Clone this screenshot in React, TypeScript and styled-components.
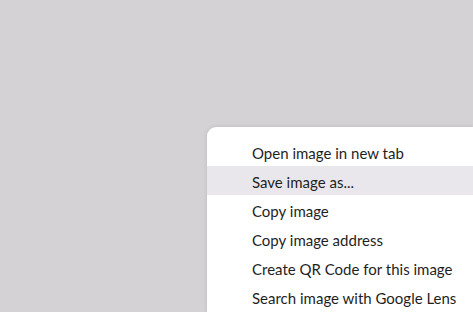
import React from 'react';
import styled, { createGlobalStyle } from 'styled-components';

const GlobalStyle = createGlobalStyle`
  html, body {
    margin: 0;
    padding: 0;
    background: #d4d2d5;
  }
`;

const Page = styled.div`
  width: 473px;
  height: 312px;
  overflow: hidden;
  display: flex;
  padding: 127px 0 0 207px;
  box-sizing: border-box;
`;

const Menu = styled.ul`
  list-style: none;
  margin: 0;
  padding: 10px 0 0;
  flex: 1;
  background: #ffffff;
  border-radius: 9px 0 0 0;
  box-shadow: 0 0 4px rgba(0, 0, 0, 0.12);
  font-family: 'Lato', 'Open Sans', sans-serif;
  font-size: 15px;
  color: #1f1f1f;
`;

const Item = styled.li<{ $active?: boolean }>`
  height: 29px;
  display: flex;
  align-items: center;
  padding: 2px 0 0 45px;
  box-sizing: border-box;
  white-space: nowrap;
  background: ${(p) => (p.$active ? '#e9e7ec' : 'transparent')};
`;

const items = [
  'Open image in new tab',
  'Save image as...',
  'Copy image',
  'Copy image address',
  'Create QR Code for this image',
  'Search image with Google Lens',
];

export default function App() {
  return (
    <>
      <GlobalStyle />
      <Page>
        <Menu>
          {items.map((label, i) => (
            <Item key={label} $active={i === 1}>
              {label}
            </Item>
          ))}
        </Menu>
      </Page>
    </>
  );
}
